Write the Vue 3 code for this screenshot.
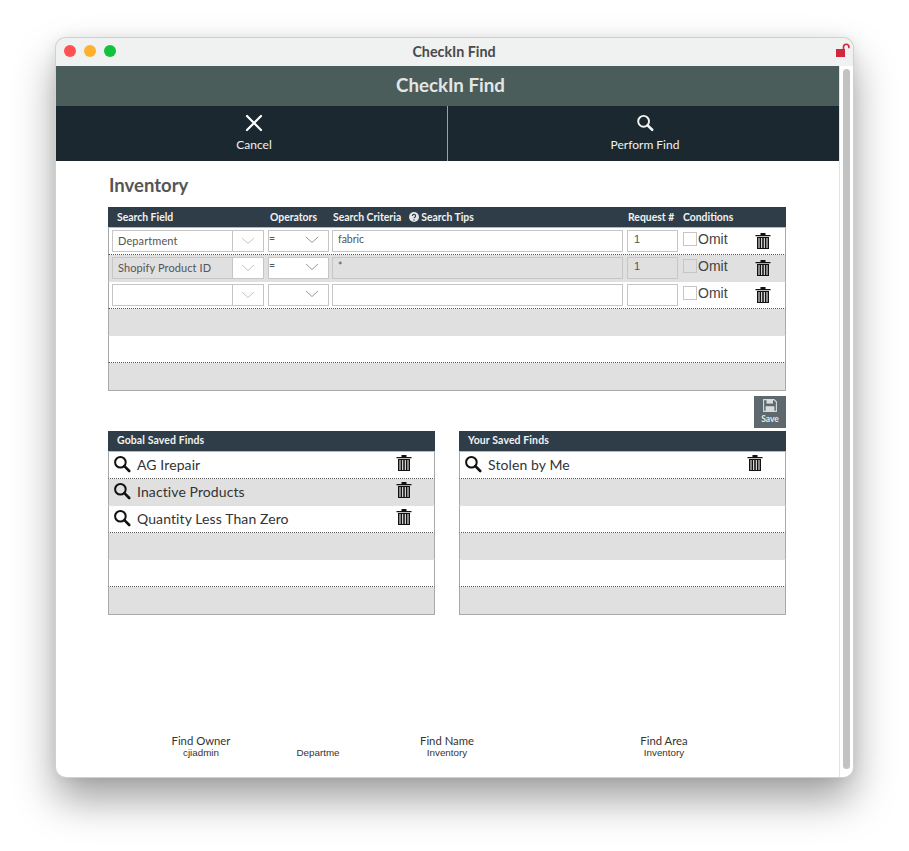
<template>
  <div class="page">
    <div class="window">
      <div class="titlebar">
        <div class="lights">
          <span class="light red"></span>
          <span class="light amber"></span>
          <span class="light green"></span>
        </div>
        <span class="title-text">CheckIn Find</span>
        <svg class="lock" width="14" height="14" viewBox="0 0 14 14">
          <rect x="0" y="6" width="9" height="8" fill="#d3263f" />
          <path d="M7.5 6.5V4a2.7 2.7 0 0 1 5.4 0v1.2" fill="none" stroke="#d3263f" stroke-width="1.6" />
        </svg>
      </div>
      <div class="body">
        <div class="main">
          <div class="app-header">CheckIn Find</div>
          <div class="toolbar">
            <div class="tool tool-left">
              <svg width="20" height="20" viewBox="0 0 20 20">
                <path d="M3 3l14 14M17 3L3 17" stroke="#fff" stroke-width="2.2" stroke-linecap="round" fill="none" />
              </svg>
              <span>Cancel</span>
            </div>
            <div class="tool tool-right">
              <svg width="20" height="20" viewBox="0 0 20 20">
                <circle cx="8.6" cy="8.3" r="5.4" fill="none" stroke="#f4f4f4" stroke-width="1.9" />
                <path d="M12.6 12.4l4.6 4.4" stroke="#f4f4f4" stroke-width="2.6" stroke-linecap="round" />
              </svg>
              <span>Perform Find</span>
            </div>
          </div>

          <div class="content">
            <h2 class="section-title">Inventory</h2>

            <div class="grid-box">
              <div class="grid-head">
                <span class="col-field">Search Field</span>
                <span class="col-op">Operators</span>
                <span class="col-crit">
                  Search Criteria
                  <span class="tips">
                    <svg width="10" height="10" viewBox="0 0 10 10">
                      <circle cx="5" cy="5" r="5" fill="#e4e6e8" />
                      <path d="M3.4 3.9a1.6 1.6 0 1 1 2.4 1.4c-.6.3-.8.6-.8 1" stroke="#2f3d49" stroke-width="1.1" fill="none" />
                      <circle cx="5" cy="8" r=".7" fill="#2f3d49" />
                    </svg>
                    Search Tips
                  </span>
                </span>
                <span class="col-req">Request #</span>
                <span class="col-cond">Conditions</span>
              </div>

              <div
                v-for="(row, i) in rows"
                :key="i"
                class="row"
                :class="{ shaded: i % 2 === 1, 'last-row': i === 5 }"
              >
                <template v-if="row">
                  <div class="select col-field-box">
                    <span class="select-value">{{ row.field }}</span>
                    <span class="select-arrow">
                      <svg width="14" height="8" viewBox="0 0 14 8"><path d="M1 1l6 5.5L13 1" fill="none" stroke="#c4c4c4" /></svg>
                    </span>
                  </div>
                  <div class="select col-op-box">
                    <span class="op-value">{{ row.op }}</span>
                    <svg class="op-arrow" width="14" height="8" viewBox="0 0 14 8"><path d="M1 1l6 5.5L13 1" fill="none" stroke="#999" /></svg>
                  </div>
                  <div class="input col-crit-box">{{ row.criteria }}</div>
                  <div class="input col-req-box">{{ row.request }}</div>
                  <span class="check"></span>
                  <span class="omit">Omit</span>
                  <svg class="trash row-trash" width="16" height="17" viewBox="0 0 16 17">
                    <path d="M0.5 3h15v1.2h-15zM5.5 1h5v2h-5z" fill="#111" />
                    <path d="M2 5h12v12H2z" fill="#111" />
                    <path d="M4 6v10M6.7 6v10M9.3 6v10M12 6v10" stroke="#fff" stroke-width="1" />
                  </svg>
                </template>
              </div>
            </div>

            <div class="save-line">
              <div class="save">
                <svg width="14" height="13" viewBox="0 0 14 13">
                  <path d="M1 .6h10l2.4 2.2v9.6H.6V.6z" fill="none" stroke="#d8dcdd" stroke-width="1.1" />
                  <rect x="3.5" y="1" width="6.5" height="3.6" fill="#d8dcdd" />
                  <rect x="2.6" y="7.2" width="8.8" height="5" fill="#d8dcdd" />
                </svg>
                <span>Save</span>
              </div>
            </div>

            <div class="lists">
              <div v-for="list in lists" :key="list.title" class="list">
                <div class="list-head">{{ list.title }}</div>
                <div
                  v-for="(name, i) in list.items"
                  :key="i"
                  class="list-row"
                  :class="{ shaded: i % 2 === 1, 'last-row': i === 5 }"
                >
                  <template v-if="name">
                    <svg class="find-icon" width="18" height="18" viewBox="0 0 18 18">
                      <circle cx="7.4" cy="7.2" r="5.3" fill="none" stroke="#111" stroke-width="2" />
                      <path d="M11.4 11.2l4.8 4.8" stroke="#111" stroke-width="2.6" stroke-linecap="round" />
                    </svg>
                    <span class="list-name">{{ name }}</span>
                    <svg class="trash list-trash" width="16" height="17" viewBox="0 0 16 17">
                      <path d="M0.5 3h15v1.2h-15zM5.5 1h5v2h-5z" fill="#111" />
                      <path d="M2 5h12v12H2z" fill="#111" />
                      <path d="M4 6v10M6.7 6v10M9.3 6v10M12 6v10" stroke="#fff" stroke-width="1" />
                    </svg>
                  </template>
                </div>
              </div>
            </div>

            <div class="footer">
              <div v-for="f in footer" :key="f.value" class="foot-cell">
                <div class="foot-label">{{ f.label }}</div>
                <div class="foot-value">{{ f.value }}</div>
              </div>
            </div>
          </div>
        </div>
        <div class="scrollbar"><div class="thumb"></div></div>
      </div>
    </div>
  </div>
</template>

<script setup>
const rows = [
  { field: "Department", op: "=", criteria: "fabric", request: "1" },
  { field: "Shopify Product ID", op: "=", criteria: "*", request: "1" },
  { field: "", op: "", criteria: "", request: "" },
  null,
  null,
  null,
];

const lists = [
  {
    title: "Gobal Saved Finds",
    items: ["AG Irepair", "Inactive Products", "Quantity Less Than Zero", "", "", ""],
  },
  {
    title: "Your Saved Finds",
    items: ["Stolen by Me", "", "", "", "", ""],
  },
];

const footer = [
  { label: "Find Owner", value: "cjiadmin" },
  { label: "", value: "Departme" },
  { label: "Find Name", value: "Inventory" },
  { label: "Find Area", value: "Inventory" },
];
</script>

<style>
html,
body {
  background: #fff;
}
</style>

<style scoped>
.page {
  height: 851px;
  box-sizing: border-box;
  padding: 38px 0 0 56px;
  overflow: hidden;
}

.window {
  width: 797px;
  height: 739px;
  border-radius: 10px;
  overflow: hidden;
  background: #fff;
  box-shadow: 0 0 0 1px #d0d0d0, 0 22px 42px rgba(0, 0, 0, 0.38), 0 0 14px rgba(0, 0, 0, 0.08);
  display: flex;
  flex-direction: column;
  font-family: Lato, "Open Sans", sans-serif;
}

.titlebar {
  height: 28px;
  flex: none;
  background: #f0f1f1;
  position: relative;
  display: flex;
  align-items: center;
  justify-content: center;
}

.lights {
  position: absolute;
  left: 8px;
  top: 7px;
  display: flex;
  gap: 8px;
}

.light {
  width: 12px;
  height: 12px;
  border-radius: 50%;
}

.red {
  background: #ff5151;
}

.amber {
  background: #ffb02e;
}

.green {
  background: #12c13e;
}

.title-text {
  font-size: 14.3px;
  font-weight: 700;
  color: #4a4a4a;
  margin-left: -1px;
  margin-top: -1px;
}

.lock {
  position: absolute;
  right: 3px;
  top: 5px;
}

.body {
  flex: 1;
  display: flex;
  min-height: 0;
}

.main {
  width: 783px;
  flex: none;
}

.app-header {
  height: 40px;
  background: #4b5d5a;
  color: #e4e6e5;
  font-size: 18.7px;
  font-weight: 700;
  display: flex;
  align-items: center;
  justify-content: center;
  padding: 0 0 2px 6px;
  box-sizing: border-box;
}

.toolbar {
  height: 55px;
  background: #1c2830;
  display: flex;
}

.tool {
  flex: none;
  color: #f2f2f2;
  font-size: 12px;
  display: flex;
  flex-direction: column;
  align-items: center;
  padding-top: 7px;
  box-sizing: border-box;
}

.tool span {
  margin-top: 4px;
  line-height: 15px;
}

.tool-left {
  width: 391px;
  padding-left: 5px;
}

.tool-right {
  width: 392px;
  padding-left: 3px;
  border-left: 1px solid #9aa2a6;
}

.content {
  padding: 13px 0 0 52px;
}

.section-title {
  margin: 0;
  font-size: 18.5px;
  line-height: 22px;
  font-weight: 700;
  color: #555;
  height: 33px;
  padding-left: 1px;
}

.grid-box {
  width: 678px;
}

.grid-head {
  height: 21px;
  box-sizing: border-box;
  border-bottom: 1px solid #b4b8bb;
  background: #2f3d49;
  color: #f2f2f2;
  font-size: 10.4px;
  font-weight: 700;
  display: flex;
  align-items: center;
}

.grid-head > span {
  flex: none;
}

.col-field {
  width: 162px;
  padding-left: 9px;
  box-sizing: border-box;
}

.col-op {
  width: 63px;
}

.col-crit {
  width: 295px;
}

.tips {
  margin-left: 5px;
}

.tips svg {
  vertical-align: -1px;
}

.col-req {
  width: 55px;
}

.col-cond {
  width: 80px;
}

.row {
  height: 27px;
  box-sizing: border-box;
  border-left: 1px solid #a9a9a9;
  border-right: 1px solid #a9a9a9;
  border-bottom: 1px dotted #555;
  display: flex;
  align-items: flex-start;
  padding: 2px 0 0 3px;
  background: #fff;
}

.row.shaded {
  background: #e0e0e0;
  border-bottom: 1px solid #e0e0e0;
}

.row.last-row {
  height: 28px;
  border-bottom: 1px solid #a9a9a9;
}

.select,
.input {
  height: 22px;
  box-sizing: border-box;
  border: 1px solid #c6c6c6;
  color: #555;
  font-size: 10.5px;
  flex: none;
}

.row:not(.shaded) .select,
.row:not(.shaded) .input {
  background: #fff;
}

.col-field-box {
  width: 152px;
  display: flex;
}

.select-value {
  flex: 1;
  padding: 3px 0 0 5px;
  font-size: 11px;
  letter-spacing: 0.1px;
}

.select-arrow {
  width: 30px;
  background: #fff;
  border-left: 1px solid #c6c6c6;
  display: flex;
  align-items: center;
  justify-content: center;
}

.col-op-box {
  width: 61px;
  margin-left: 4px;
  position: relative;
  background: #fff;
}

.op-value {
  position: absolute;
  left: 0;
  top: 1px;
}

.op-arrow {
  position: absolute;
  right: 9px;
  top: 5px;
}

.col-crit-box {
  width: 291px;
  margin-left: 3px;
  padding: 2px 0 0 5px;
}

.col-req-box {
  width: 51px;
  margin-left: 4px;
  padding: 2px 0 0 6px;
  font-family: "Liberation Sans", Arial, sans-serif;
  font-size: 11px;
}

.check {
  width: 14px;
  height: 14px;
  box-sizing: border-box;
  border: 1px solid #c6c6c6;
  margin: 2px 0 0 5px;
  flex: none;
}

.omit {
  font-family: "Liberation Sans", Arial, sans-serif;
  font-size: 14px;
  line-height: 18px;
  color: #444;
  margin-left: 1px;
  width: 31px;
  flex: none;
}

.row-trash {
  margin: 2px 0 0 26px;
  flex: none;
}

.save-line {
  width: 678px;
  height: 40px;
  padding-top: 5px;
  box-sizing: border-box;
  display: flex;
  justify-content: flex-end;
}

.save {
  width: 32px;
  height: 32px;
  background: #5d696f;
  color: #e8e8e8;
  font-size: 8.5px;
  font-weight: 700;
  display: flex;
  flex-direction: column;
  align-items: center;
  padding-top: 3px;
  box-sizing: border-box;
}

.save span {
  line-height: 11px;
  margin-top: 2px;
}

.lists {
  width: 678px;
  display: flex;
  justify-content: space-between;
}

.list {
  width: 327px;
}

.list-head {
  height: 21px;
  box-sizing: border-box;
  border-bottom: 1px solid #b4b8bb;
  background: #2f3d49;
  color: #f2f2f2;
  font-size: 10.5px;
  font-weight: 700;
  letter-spacing: 0.1px;
  padding-left: 9px;
  line-height: 19px;
}

.list-row {
  height: 27px;
  box-sizing: border-box;
  border-left: 1px solid #a9a9a9;
  border-right: 1px solid #a9a9a9;
  border-bottom: 1px dotted #555;
  background: #fff;
  display: flex;
  align-items: flex-start;
  padding: 3px 0 0 4px;
}

.list-row.shaded {
  background: #e0e0e0;
  border-bottom: 1px solid #e0e0e0;
}

.list-row.last-row {
  height: 28px;
  border-bottom: 1px solid #a9a9a9;
}

.find-icon {
  flex: none;
}

.list-name {
  flex: 1;
  margin-left: 6px;
  font-size: 14px;
  line-height: 20px;
  color: #333;
  letter-spacing: 0.1px;
}

.list-trash {
  flex: none;
  margin: -1px 22px 0 0;
}

.footer {
  display: grid;
  grid-template-columns: 117px 129px 217px 60px;
  margin-top: 119px;
  padding-left: 63px;
  color: #333;
}

.foot-cell {
  height: 26px;
  white-space: nowrap;
}

.foot-label {
  font-size: 11.3px;
  line-height: 13px;
  height: 13px;
  width: 60px;
  text-align: center;
}

.foot-value {
  font-family: "Liberation Sans", Arial, sans-serif;
  font-size: 9.8px;
  line-height: 12px;
  width: 60px;
  text-align: center;
}

.scrollbar {
  flex: none;
  width: 14px;
  background: #fff;
  border-left: 1px solid #e4e4e4;
  box-sizing: border-box;
  padding: 3px 3px 8px 3px;
}

.thumb {
  height: 100%;
  background: #c2c2c2;
  border-radius: 4px;
}
</style>
